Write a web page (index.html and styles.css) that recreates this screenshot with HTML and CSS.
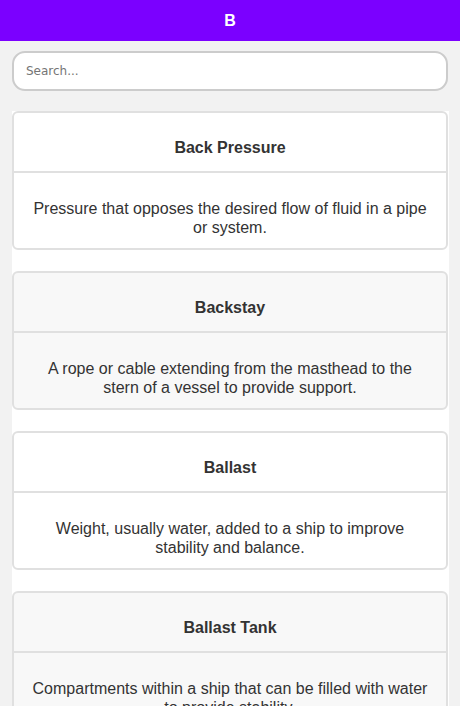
FILE: index.html
```html
<!DOCTYPE html>
<html lang="en">
<head>
<meta charset="utf-8">
<title>Glossary - B</title>
<link rel="stylesheet" href="styles.css">
</head>
<body>
<header class="topbar">B</header>
<div class="search-wrap">
  <input class="search" type="text" placeholder="Search...">
</div>
<main class="list">
  <section class="card">
    <h3 class="card-title">Back Pressure</h3>
    <p class="card-body">Pressure that opposes the desired flow of fluid in a pipe or system.</p>
  </section>
  <section class="card alt">
    <h3 class="card-title">Backstay</h3>
    <p class="card-body">A rope or cable extending from the masthead to the stern of a vessel to provide support.</p>
  </section>
  <section class="card">
    <h3 class="card-title">Ballast</h3>
    <p class="card-body">Weight, usually water, added to a ship to improve stability and balance.</p>
  </section>
  <section class="card alt">
    <h3 class="card-title">Ballast Tank</h3>
    <p class="card-body">Compartments within a ship that can be filled with water to provide stability.</p>
  </section>
</main>
</body>
</html>
```

FILE: styles.css
```css
html, body {
  margin: 0;
  padding: 0;
  height: 100%;
  overflow: hidden;
}
body {
  background: #f2f2f2;
  font-family: "Liberation Sans", Arial, sans-serif;
  color: #333;
}
.topbar {
  height: 41px;
  background: #7b00ff;
  color: #fff;
  font-weight: bold;
  font-size: 16px;
  display: flex;
  align-items: center;
  justify-content: center;
}
.search-wrap {
  padding: 10px 12px 0 12px;
}
.search {
  display: block;
  box-sizing: border-box;
  width: 436px;
  height: 40px;
  margin: 0;
  border: 2px solid #cccccc;
  border-radius: 13px;
  background: #fff;
  padding: 0 12px;
  font-family: "DejaVu Sans", sans-serif;
  font-size: 12px;
  color: #333;
  outline: none;
}
.search::placeholder {
  color: #757575;
}
.list {
  margin: 20px 11px 0 12px;
  background: #fff;
}
.card {
  box-sizing: border-box;
  margin: 0 1px 21px 0;
  border: 2px solid #e0e0e0;
  border-radius: 6px;
  background: #fff;
  height: 139px;
  overflow: hidden;
}
.card.alt {
  background: #f8f8f8;
}
.card-title {
  margin: 0;
  padding: 26px 10px 0 10px;
  height: 32px;
  font-size: 16px;
  line-height: 18px;
  font-weight: bold;
  text-align: center;
  color: #333;
  border-bottom: 2px solid #e0e0e0;
}
.card-body {
  margin: 0;
  padding: 26px 15px 10px 15px;
  font-size: 16px;
  line-height: 19px;
  text-align: center;
  color: #333;
}
```
